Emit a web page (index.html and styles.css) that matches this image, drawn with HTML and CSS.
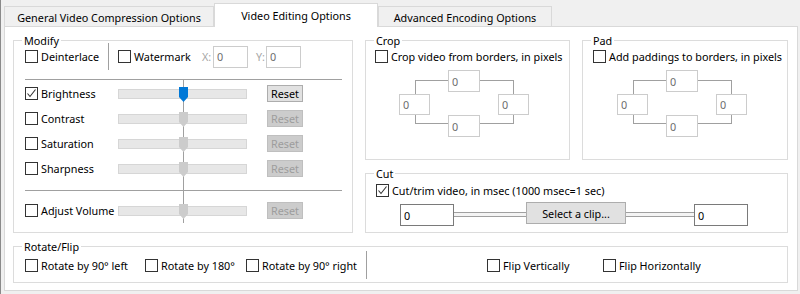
FILE: index.html
```html
<!DOCTYPE html>
<html lang="en">
<head>
  <meta charset="UTF-8">
  <title>Video Editing Options</title>
  <link rel="stylesheet" href="styles.css">
</head>
<body>

<div class="window">
  <div class="tabs">
    <div class="tab t1">General Video Compression Options</div>
    <div class="tab t2 active">Video Editing Options</div>
    <div class="tab t3">Advanced Encoding Options</div>
  </div>

  <div class="page">
    <div class="top">

      <div class="group modify">
        <div class="gtitle">Modify</div>
        <div class="row first">
          <label class="check deint"><span class="cb"></span>Deinterlace</label>
          <div class="vsep"></div>
          <label class="check wm"><span class="cb"></span>Watermark</label>
          <span class="dim xl">X:</span><input class="field dis xy" type="text" value="0">
          <span class="dim yl">Y:</span><input class="field dis xy" type="text" value="0">
        </div>
        <div class="hr"></div>
        <div class="vline"></div>
        <div class="srow first">
          <label class="check slabel"><span class="cb"><svg width="11" height="11"><path d="M1.5 5.5 L4 8.5 L9.5 1.5" fill="none" stroke="#333" stroke-width="1.1"/></svg></span>Brightness</label>
          <div class="slider"><svg class="thumb" width="9" height="15"><path d="M0 0 H9 V10 L4.5 15 L0 10 Z" fill="#0078d7"/></svg></div>
          <button class="btn">Reset</button>
        </div>
        <div class="srow">
          <label class="check slabel"><span class="cb"></span>Contrast</label>
          <div class="slider"><svg class="thumb" width="9" height="15"><path d="M0 0 H9 V10 L4.5 15 L0 10 Z" fill="#cccccc"/></svg></div>
          <button class="btn off">Reset</button>
        </div>
        <div class="srow">
          <label class="check slabel"><span class="cb"></span>Saturation</label>
          <div class="slider"><svg class="thumb" width="9" height="15"><path d="M0 0 H9 V10 L4.5 15 L0 10 Z" fill="#cccccc"/></svg></div>
          <button class="btn off">Reset</button>
        </div>
        <div class="srow">
          <label class="check slabel"><span class="cb"></span>Sharpness</label>
          <div class="slider"><svg class="thumb" width="9" height="15"><path d="M0 0 H9 V10 L4.5 15 L0 10 Z" fill="#cccccc"/></svg></div>
          <button class="btn off">Reset</button>
        </div>
        <div class="hr second"></div>
        <div class="srow volume">
          <label class="check slabel"><span class="cb"></span>Adjust Volume</label>
          <div class="slider"><svg class="thumb" width="9" height="15"><path d="M0 0 H9 V10 L4.5 15 L0 10 Z" fill="#cccccc"/></svg></div>
          <button class="btn off">Reset</button>
        </div>
      </div>

      <div class="right">
        <div class="pair">
          <div class="group crop">
            <div class="gtitle">Crop</div>
            <div class="crow">
              <label class="check"><span class="cb"></span>Crop video from borders, in pixels</label>
            </div>
            <div class="diagram">
              <div class="frame"></div>
              <input class="field dis node n-top" type="text" value="0">
              <input class="field dis node n-left" type="text" value="0">
              <input class="field dis node n-right" type="text" value="0">
              <input class="field dis node n-bottom" type="text" value="0">
            </div>
          </div>
          <div class="group pad">
            <div class="gtitle">Pad</div>
            <div class="crow">
              <label class="check"><span class="cb"></span>Add paddings to borders, in pixels</label>
            </div>
            <div class="diagram">
              <div class="frame"></div>
              <input class="field dis node n-top" type="text" value="0">
              <input class="field dis node n-left" type="text" value="0">
              <input class="field dis node n-right" type="text" value="0">
              <input class="field dis node n-bottom" type="text" value="0">
            </div>
          </div>
        </div>

        <div class="group cut">
          <div class="gtitle">Cut</div>
          <div class="crow">
            <label class="check"><span class="cb"><svg width="11" height="11"><path d="M1.5 5.5 L4 8.5 L9.5 1.5" fill="none" stroke="#333" stroke-width="1.1"/></svg></span>Cut/trim video, in msec (1000 msec=1 sec)</label>
          </div>
          <div class="cliprow">
            <input class="field clip" type="text" value="0">
            <div class="rail r1"></div>
            <button class="btn select">Select a clip...</button>
            <div class="rail r2"></div>
            <input class="field clip" type="text" value="0">
          </div>
        </div>
      </div>
    </div>

    <div class="group rotate">
      <div class="gtitle">Rotate/Flip</div>
      <div class="rrow">
        <label class="check w120"><span class="cb"></span>Rotate by 90° left</label>
        <label class="check w101"><span class="cb"></span>Rotate by 180°</label>
        <label class="check w120"><span class="cb"></span>Rotate by 90° right</label>
        <div class="vsep"></div>
        <label class="check flipv"><span class="cb"></span>Flip Vertically</label>
        <label class="check"><span class="cb"></span>Flip Horizontally</label>
      </div>
    </div>
  </div>
</div>

</body>
</html>
```

FILE: styles.css
```css
html, body {
  margin: 0;
  padding: 0;
  background-color: #f0f0f0;
  font-family: "Noto Sans", "Open Sans", sans-serif;
  font-size: 10.8px;
  color: #000;
}

.window {
  height: 294px;
  box-sizing: border-box;
  border-left: 1px solid #8a8a8a;
  padding-left: 3px;
}

/* tab strip */
.tabs {
  display: flex;
  align-items: flex-end;
  height: 23px;
  padding-top: 3px;
}

.tab {
  height: 20px;
  box-sizing: border-box;
  border: 1px solid #d9d9d9;
  border-bottom: none;
  background-color: #f0f0f0;
  display: flex;
  align-items: center;
  justify-content: center;
  padding-top: 1px;
  white-space: nowrap;
}

.t1 { width: 210px; }
.t2 { width: 164px; }
.t3 { width: 174px; }

.tab.active {
  height: 24px;
  margin-bottom: -1px;
  background-color: #fff;
  position: relative;
  z-index: 1;
  padding-top: 0;
}

.page {
  width: 794px;
  height: 265px;
  box-sizing: border-box;
  background-color: #fff;
  border: 1px solid #d9d9d9;
  padding: 13px 0 0 8px;
}

.top {
  display: flex;
  gap: 12px;
}

/* group boxes */
.group {
  border: 1px solid #dcdcdc;
  box-sizing: border-box;
  position: relative;
}

.gtitle {
  width: max-content;
  height: 15px;
  line-height: 15px;
  margin: -8px 0 -7px 8px;
  padding: 0 2px;
  background-color: #fff;
}

.modify {
  width: 340px;
  height: 193px;
}

.right {
  width: 423px;
  display: flex;
  flex-direction: column;
  gap: 13px;
}

.pair {
  display: flex;
  gap: 12px;
}

.crop { width: 205px; height: 120px; }
.pad { width: 206px; height: 120px; }
.cut { height: 60px; }

.rotate {
  width: 775px;
  height: 37px;
  margin-top: 13px;
}

/* checkboxes */
.check {
  display: flex;
  align-items: center;
  gap: 3px;
  white-space: nowrap;
}

.cb {
  display: block;
  flex: none;
  width: 13px;
  height: 13px;
  box-sizing: border-box;
  border: 1px solid #333;
  background-color: #fff;
}

.cb svg {
  display: block;
}

/* text fields */
.field {
  box-sizing: border-box;
  height: 22px;
  margin: 0;
  padding: 0 0 0 3px;
  border: 1px solid #7a7a7a;
  background-color: #fff;
  color: #000;
  font: inherit;
  outline: none;
}

.field.dis {
  border-color: #cccccc;
  color: #6d6d6d;
}

.btn {
  box-sizing: border-box;
  margin: 0;
  padding: 0;
  font: inherit;
  color: #000;
  background-color: #e1e1e1;
  border: 1px solid #adadad;
}

.btn.off {
  background-color: #cccccc;
  border-color: #bfbfbf;
  color: #9d9d9d;
}

.vsep {
  width: 1px;
  align-self: stretch;
  background-color: #a0a0a0;
}

.dim {
  color: #a6a6a6;
}

/* modify group */
.row.first {
  display: flex;
  align-items: center;
  height: 27px;
  margin-top: 2px;
  padding-left: 11px;
}

.deint { width: 83px; }

.wm {
  width: 84px;
  margin-left: 9px;
}

.xl { width: 11px; }

.yl {
  width: 10px;
  margin-left: 8px;
}

.xy {
  width: 35px;
}

.hr {
  height: 1px;
  background-color: #a0a0a0;
  margin: 9px 10px 0 11px;
}

.vline {
  position: absolute;
  left: 169px;
  top: 39px;
  width: 1px;
  height: 143px;
  background-color: #a0a0a0;
}

.srow {
  display: flex;
  align-items: center;
  height: 25px;
  padding-left: 11px;
}

.srow.first { margin-top: 1px; }
.srow.volume { margin-top: 7px; }

.slabel { width: 93px; }

.slider {
  position: relative;
  width: 129px;
  height: 10px;
  box-sizing: border-box;
  background-color: #e7e7e7;
  border: 1px solid #d6d6d6;
  margin-right: 20px;
}

.thumb {
  position: absolute;
  left: 60px;
  top: -3px;
}

.srow .btn {
  width: 36px;
  height: 17px;
  line-height: 14px;
}

/* crop / pad */
.crow {
  display: flex;
  align-items: center;
  height: 23px;
  margin-top: 4px;
  padding-left: 9px;
}

.pad .crow { padding-left: 10px; }

.diagram {
  position: relative;
  width: 130px;
  height: 67px;
  margin: 2px 0 0 33px;
}

.pad .diagram { margin-left: 34px; }

.frame {
  position: absolute;
  left: 16px;
  top: 10px;
  width: 99px;
  height: 44px;
  box-sizing: border-box;
  border: 1px solid #a0a0a0;
}

.node {
  position: absolute;
  width: 32px;
}

.n-top { left: 49px; top: 0; }
.n-bottom { left: 49px; top: 45px; }
.n-left { left: 0; top: 24px; width: 31px; height: 21px; }
.n-right { left: 99px; top: 24px; width: 31px; height: 21px; }

/* cut */
.cut .crow {
  margin-top: 5px;
  padding-left: 10px;
}

.cliprow {
  display: flex;
  align-items: center;
  height: 24px;
  margin-left: 34px;
}

.clip {
  width: 54px;
  align-self: flex-end;
}

.rail {
  height: 5px;
  box-sizing: border-box;
  border-top: 1px solid #a0a0a0;
  border-bottom: 1px solid #a0a0a0;
  background-color: #f4f4f4;
}

.r1 { width: 72px; }
.r2 { width: 68px; }

.btn.select {
  width: 100px;
  height: 22px;
  align-self: flex-start;
}

/* rotate / flip */
.rrow {
  display: flex;
  align-items: center;
  height: 28px;
  margin-top: 4px;
  padding-left: 11px;
}

.w120 { width: 120px; }
.w101 { width: 101px; }

.flipv {
  width: 116px;
  margin-left: 120px;
}
```
